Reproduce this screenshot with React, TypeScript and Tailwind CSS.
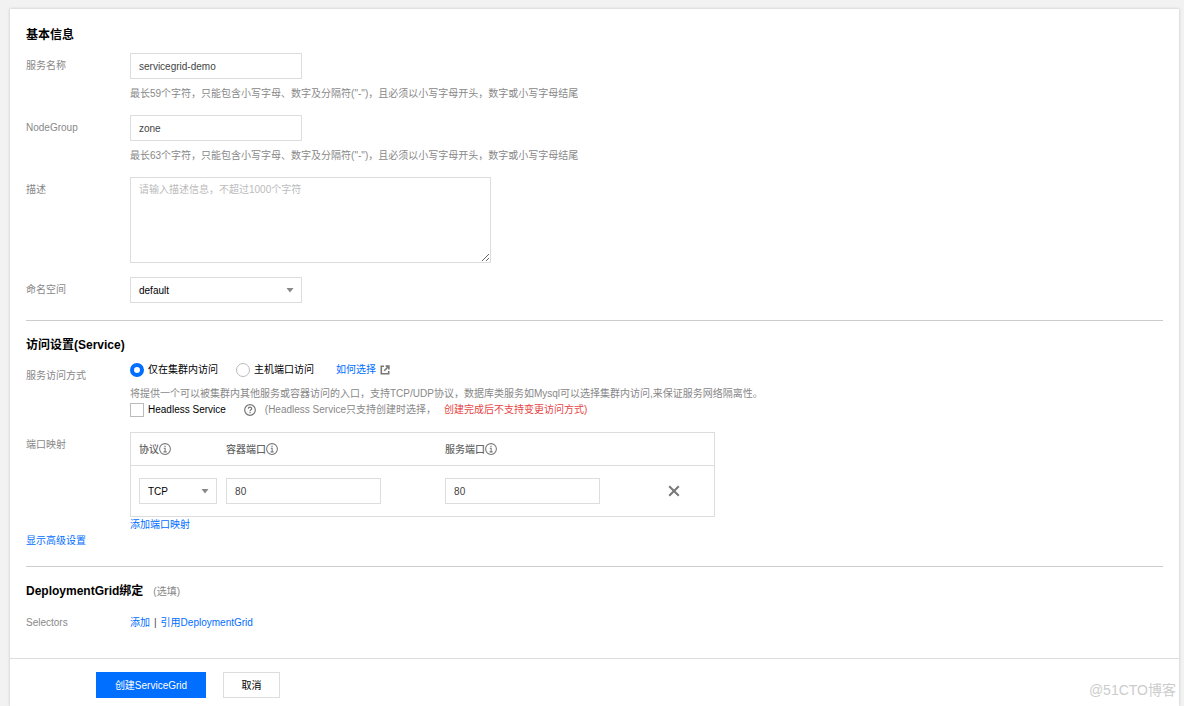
import { useState } from "react";
import type { ReactNode } from "react";

const inputClass =
  "block h-[26px] border border-[#ddd] bg-white px-2 text-[#444] outline-none focus:border-[#006eff]";

const linkClass = "text-[#006eff] hover:underline";

const InfoIcon = () => (
  <svg viewBox="0 0 16 16" className="size-3 shrink-0" fill="none" stroke="#777" strokeWidth="1.4">
    <circle cx="8" cy="8" r="7.2" />
    <path d="M6.3 7h1.9v4.7M6.1 11.8h4.1" />
    <path d="M7.2 4.4h1.6" strokeWidth="1.7" />
  </svg>
);

const HelpIcon = () => (
  <svg viewBox="0 0 16 16" className="size-3 shrink-0" fill="none" stroke="#777" strokeWidth="1.6">
    <circle cx="8" cy="8" r="7.1" />
    <path d="M5.7 6.4c0-1.4 1-2.2 2.3-2.2s2.3.8 2.3 2c0 1.5-2.3 1.6-2.3 3.3" />
    <path d="M8 10.8v1.6" />
  </svg>
);

const ExternalIcon = () => (
  <svg viewBox="0 0 10 10" className="size-[10px] shrink-0" fill="none" stroke="#777" strokeWidth="1.6">
    <path d="M4 1.3H1.3v7.4h7.4V6" />
    <path d="M5.6 1.1h3.3v3.3M8.8 1.2L4.2 5.8" />
  </svg>
);

const CloseIcon = () => (
  <svg viewBox="0 0 12 12" className="size-3" fill="none" stroke="#777" strokeWidth="2">
    <path d="M1.2 1.2l9.6 9.6M10.8 1.2l-9.6 9.6" />
  </svg>
);

type RowProps = {
  label: string;
  htmlFor?: string;
  className?: string;
  children: ReactNode;
};

const FormRow = ({ label, htmlFor, className, children }: RowProps) => (
  <div className={`flex ${className ?? ""}`}>
    <div className="w-[104px] shrink-0 leading-[26px] text-[#888]">
      {htmlFor ? <label htmlFor={htmlFor}>{label}</label> : <span>{label}</span>}
    </div>
    <div className="min-w-0 flex-1">{children}</div>
  </div>
);

const SectionTitle = ({ children }: { children: ReactNode }) => (
  <h2 className="mb-2 text-xs leading-5 font-bold text-black">{children}</h2>
);

type SelectProps = {
  id: string;
  label?: string;
  options: string[];
  className: string;
};

const Select = ({ id, label, options, className }: SelectProps) => (
  <div className={`relative ${className}`}>
    <select
      id={id}
      aria-label={label}
      className="block h-[26px] w-full appearance-none border border-[#ddd] bg-white px-2 text-black outline-none"
    >
      {options.map((option) => (
        <option key={option}>{option}</option>
      ))}
    </select>
    <svg viewBox="0 0 8 5" className="pointer-events-none absolute top-[11px] right-2 h-[5px] w-2">
      <path d="M0.5 0h7L4 4.5z" fill="#888" />
    </svg>
  </div>
);

const accessTypes = ["仅在集群内访问", "主机端口访问"];

const App = () => {
  const [name, setName] = useState("servicegrid-demo");
  const [nodeGroup, setNodeGroup] = useState("zone");
  const [access, setAccess] = useState(accessTypes[0]);
  const [containerPort, setContainerPort] = useState("80");
  const [servicePort, setServicePort] = useState("80");

  return (
    <div className="flex min-h-screen flex-col bg-[#f2f2f2] pt-[9px] pr-[5px] pl-[10px] font-['Liberation_Sans','Noto_Sans_CJK_SC',sans-serif] text-[10px]">
      <form
        className="flex flex-1 flex-col bg-white shadow-[0_0_3px_rgba(0,0,0,0.2)]"
        onSubmit={(e) => e.preventDefault()}
      >
        <div className="px-4 pt-4">
          <SectionTitle>基本信息</SectionTitle>
          <FormRow label="服务名称" htmlFor="name" className="mb-[11px]">
            <input
              id="name"
              className={`${inputClass} w-[172px]`}
              value={name}
              onChange={(e) => setName(e.target.value)}
            />
            <p className="mt-[5px] leading-5 text-[#888]">
              最长59个字符，只能包含小写字母、数字及分隔符("-")，且必须以小写字母开头，数字或小写字母结尾
            </p>
          </FormRow>
          <FormRow label="NodeGroup" htmlFor="nodegroup" className="mb-[11px]">
            <input
              id="nodegroup"
              className={`${inputClass} w-[172px]`}
              value={nodeGroup}
              onChange={(e) => setNodeGroup(e.target.value)}
            />
            <p className="mt-[5px] leading-5 text-[#888]">
              最长63个字符，只能包含小写字母、数字及分隔符("-")，且必须以小写字母开头，数字或小写字母结尾
            </p>
          </FormRow>
          <FormRow label="描述" htmlFor="description" className="mb-[14px]">
            <textarea
              id="description"
              className="block h-[86px] w-[361px] resize border border-[#ddd] px-2 py-1 leading-4 outline-none placeholder:text-[#bbb]"
              placeholder="请输入描述信息，不超过1000个字符"
            />
          </FormRow>
          <FormRow label="命名空间" htmlFor="namespace">
            <Select id="namespace" options={["default"]} className="w-[172px]" />
          </FormRow>

          <hr className="mt-[17px] mb-[14px] border-[#ccc]" />

          <SectionTitle>访问设置(Service)</SectionTitle>
          <FormRow label="服务访问方式" className="mb-[14px]">
            <div className="flex items-center gap-[18px] leading-[14px]">
              {accessTypes.map((type) => (
                <label key={type} className="flex items-center gap-1 text-black">
                  <input
                    type="radio"
                    name="access"
                    className="size-[14px] appearance-none rounded-full border border-[#bbb] bg-white checked:border-4 checked:border-[#006eff]"
                    checked={access === type}
                    onChange={() => setAccess(type)}
                  />
                  {type}
                </label>
              ))}
              <a href="#choose" className={`ml-1 flex items-center gap-1 ${linkClass}`}>
                如何选择
                <ExternalIcon />
              </a>
            </div>
            <p className="mt-[9px] leading-4 text-[#888]">
              将提供一个可以被集群内其他服务或容器访问的入口，支持TCP/UDP协议，数据库类服务如Mysql可以选择集群内访问,来保证服务网络隔离性。
            </p>
            <div className="flex items-center leading-4">
              <label className="flex items-center gap-1 text-black">
                <input
                  type="checkbox"
                  className="size-[14px] appearance-none border border-[#bbb] bg-white checked:bg-[#006eff]"
                />
                Headless Service
              </label>
              <span className="mr-[9px] ml-[18px]">
                <HelpIcon />
              </span>
              <span className="text-[#888]">(Headless Service只支持创建时选择，</span>
              <span className="ml-2 text-[#e54545]">创建完成后不支持变更访问方式)</span>
            </div>
          </FormRow>

          <FormRow label="端口映射">
            <table className="w-[585px] table-fixed border-collapse border border-[#ddd] text-left">
              <thead>
                <tr className="h-[33px] border-b border-[#ddd] text-[#666]">
                  <th className="w-[15%] pl-2 font-medium">
                    <span className="flex items-center">协议<InfoIcon /></span>
                  </th>
                  <th className="w-[37.5%] pl-2 font-medium">
                    <span className="flex items-center">容器端口<InfoIcon /></span>
                  </th>
                  <th className="w-[37.5%] pl-2 font-medium">
                    <span className="flex items-center">服务端口<InfoIcon /></span>
                  </th>
                  <th className="w-[10%]" />
                </tr>
              </thead>
              <tbody>
                <tr className="h-[51px]">
                  <td className="pl-2">
                    <Select id="protocol" label="协议" options={["TCP", "UDP"]} className="w-[78px]" />
                  </td>
                  <td className="pl-2">
                    <input
                      aria-label="容器端口"
                      className={`${inputClass} w-[155px]`}
                      value={containerPort}
                      onChange={(e) => setContainerPort(e.target.value)}
                    />
                  </td>
                  <td className="pl-2">
                    <input
                      aria-label="服务端口"
                      className={`${inputClass} w-[155px]`}
                      value={servicePort}
                      onChange={(e) => setServicePort(e.target.value)}
                    />
                  </td>
                  <td className="pl-3">
                    <button type="button" aria-label="删除" className="block">
                      <CloseIcon />
                    </button>
                  </td>
                </tr>
              </tbody>
            </table>
            <a href="#add-port" className={`block leading-4 ${linkClass}`}>
              添加端口映射
            </a>
          </FormRow>
          <a href="#advanced" className={`block leading-4 ${linkClass}`}>
            显示高级设置
          </a>

          <hr className="mt-[17px] mb-[14px] border-[#ccc]" />

          <SectionTitle>
            DeploymentGrid绑定
            <span className="ml-[10px] text-[10px] font-normal text-[#888]">(选填)</span>
          </SectionTitle>
          <FormRow label="Selectors">
            <div className="flex gap-1 leading-[26px]">
              <a href="#add" className={linkClass}>添加</a>
              <span className="text-[#444]">|</span>
              <a href="#reference" className={linkClass}>引用DeploymentGrid</a>
            </div>
          </FormRow>
        </div>

        <div className="relative mt-[22px] flex flex-1 gap-[17px] border-t border-[#ddd] pt-[13px] pb-2 pl-[86px]">
          <button type="submit" className="h-[26px] w-[110px] bg-[#006eff] text-white">
            创建ServiceGrid
          </button>
          <button type="button" className="h-[26px] w-[57px] border border-[#ddd] bg-white text-black">
            取消
          </button>
          <span className="absolute right-[3px] bottom-[6px] text-sm text-[#ccc]">@51CTO博客</span>
        </div>
      </form>
    </div>
  );
};

export default App;
